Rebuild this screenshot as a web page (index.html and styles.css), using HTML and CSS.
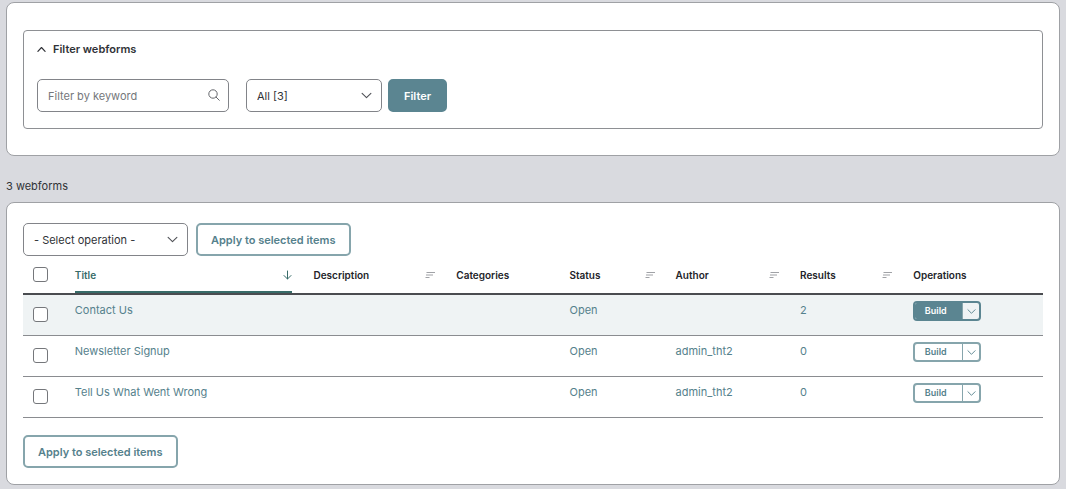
FILE: index.html
```
<!DOCTYPE html>
<html lang="en">
<head>
    <meta charset="UTF-8">
    <meta name="viewport" content="width=device-width, initial-scale=1.0">
    <title>Webforms</title>
    <link rel="stylesheet" href="styles.css">
</head>
<body>

    <!-- Shared icons -->
    <svg class="sprite" aria-hidden="true">
        <symbol id="chevron-down" viewBox="0 0 10 10">
            <path d="M1 3l4 4 4-4" fill="none" stroke="currentColor" stroke-linecap="round" stroke-linejoin="round"/>
        </symbol>
        <symbol id="sort" viewBox="0 0 10 8">
            <path d="M1.5 1.5H10M1 4h7M.5 6.5h4" fill="none" stroke="currentColor"/>
        </symbol>
    </svg>

    <main class="page">

        <!-- Filter -->
        <section class="card card-filter">
            <details class="filter" open>
                <summary class="filter-title">
                    <svg class="filter-arrow" viewBox="0 0 10 10" aria-hidden="true">
                        <path d="M1 7l4-4.200 4 4.200" fill="none" stroke="currentColor" stroke-width="1.300" stroke-linecap="round" stroke-linejoin="round"/>
                    </svg>
                    Filter webforms
                </summary>
                <form class="filter-form">
                    <div class="field field-search">
                        <input class="input" type="text" placeholder="Filter by keyword" aria-label="Filter by keyword">
                        <svg class="field-icon search-icon" viewBox="0 0 12 12" aria-hidden="true">
                            <circle cx="5" cy="5" r="4.200" fill="none" stroke="currentColor"/>
                            <path d="M8.100 8.100l3.200 3.200" stroke="currentColor" stroke-linecap="round"/>
                        </svg>
                    </div>
                    <div class="field field-state">
                        <select class="input" aria-label="State">
                            <option>All [3]</option>
                        </select>
                        <svg class="field-icon" aria-hidden="true"><use href="#chevron-down"/></svg>
                    </div>
                    <button class="button button-primary" type="button">Filter</button>
                </form>
            </details>
        </section>

        <p class="count">3 webforms</p>

        <!-- List -->
        <section class="card card-list">
            <div class="bulk">
                <div class="field field-operation">
                    <select class="input" aria-label="Operation">
                        <option>- Select operation -</option>
                    </select>
                    <svg class="field-icon" aria-hidden="true"><use href="#chevron-down"/></svg>
                </div>
                <button class="button" type="button">Apply to selected items</button>
            </div>

            <table class="table">
                <colgroup>
                    <col class="col-check">
                    <col class="col-title">
                    <col class="col-description">
                    <col class="col-categories">
                    <col class="col-status">
                    <col class="col-author">
                    <col class="col-results">
                    <col>
                </colgroup>
                <thead>
                    <tr>
                        <th class="cell-check"><input class="check" type="checkbox" aria-label="Select all webforms"></th>
                        <th>
                            <a class="sort sort-active" href="#">Title
                                <svg class="arrow-icon" viewBox="0 0 9 10" aria-hidden="true">
                                    <path d="M4.500 1v8M1 5.500L4.500 9 8 5.500" fill="none" stroke="currentColor" stroke-linecap="round" stroke-linejoin="round"/>
                                </svg>
                            </a>
                        </th>
                        <th><a class="sort" href="#">Description <svg class="sort-icon" aria-hidden="true"><use href="#sort"/></svg></a></th>
                        <th>Categories</th>
                        <th><a class="sort" href="#">Status <svg class="sort-icon" aria-hidden="true"><use href="#sort"/></svg></a></th>
                        <th><a class="sort" href="#">Author <svg class="sort-icon" aria-hidden="true"><use href="#sort"/></svg></a></th>
                        <th><a class="sort" href="#">Results <svg class="sort-icon" aria-hidden="true"><use href="#sort"/></svg></a></th>
                        <th>Operations</th>
                    </tr>
                </thead>
                <tbody>
                    <tr class="row-active">
                        <td class="cell-check"><input class="check" type="checkbox" aria-label="Select Contact Us"></td>
                        <td><a href="#">Contact Us</a></td>
                        <td></td>
                        <td></td>
                        <td><a href="#">Open</a></td>
                        <td></td>
                        <td><a href="#">2</a></td>
                        <td class="cell-ops">
                            <div class="dropbutton">
                                <button class="dropbutton-main" type="button">Build</button>
                                <button class="dropbutton-toggle" type="button" aria-label="More operations"><svg aria-hidden="true"><use href="#chevron-down"/></svg></button>
                            </div>
                        </td>
                    </tr>
                    <tr>
                        <td class="cell-check"><input class="check" type="checkbox" aria-label="Select Newsletter Signup"></td>
                        <td><a href="#">Newsletter Signup</a></td>
                        <td></td>
                        <td></td>
                        <td><a href="#">Open</a></td>
                        <td><a href="#">admin_tht2</a></td>
                        <td><a href="#">0</a></td>
                        <td class="cell-ops">
                            <div class="dropbutton">
                                <button class="dropbutton-main" type="button">Build</button>
                                <button class="dropbutton-toggle" type="button" aria-label="More operations"><svg aria-hidden="true"><use href="#chevron-down"/></svg></button>
                            </div>
                        </td>
                    </tr>
                    <tr>
                        <td class="cell-check"><input class="check" type="checkbox" aria-label="Select Tell Us What Went Wrong"></td>
                        <td><a href="#">Tell Us What Went Wrong</a></td>
                        <td></td>
                        <td></td>
                        <td><a href="#">Open</a></td>
                        <td><a href="#">admin_tht2</a></td>
                        <td><a href="#">0</a></td>
                        <td class="cell-ops">
                            <div class="dropbutton">
                                <button class="dropbutton-main" type="button">Build</button>
                                <button class="dropbutton-toggle" type="button" aria-label="More operations"><svg aria-hidden="true"><use href="#chevron-down"/></svg></button>
                            </div>
                        </td>
                    </tr>
                </tbody>
            </table>

            <button class="button" type="button">Apply to selected items</button>
        </section>

    </main>

</body>
</html>
```
FILE: styles.css
```
* {
    box-sizing: border-box;
}

body {
    margin: 0;
    background: #d9dadf;
    color: #303237;
    font-family: Inter, "Liberation Sans", sans-serif;
    font-size: 11px;
    line-height: 16px;
}

input, select, button {
    font: inherit;
    color: inherit;
}

a {
    color: #55818c;
    text-decoration: none;
}

.sprite {
    display: none;
}

.page {
    padding: 2px 6px 4px;
}

/* Cards */
.card {
    padding: 0 16px;
    background: #fff;
    border: 1px solid #9fa1a5;
    border-radius: 8px;
}

.card-filter {
    padding-top: 27px;
    padding-bottom: 26px;
}

.card-list {
    padding-top: 20px;
    padding-bottom: 16px;
}

.count {
    margin: 0;
    padding: 22px 0 8px;
}

/* Filter */
.filter {
    padding: 10px 13px 16px;
    border: 1px solid #8e9094;
    border-radius: 4px;
}

.filter-title {
    display: flex;
    align-items: center;
    gap: 7px;
    font-weight: 600;
    list-style: none;
}

.filter-arrow {
    width: 9px;
    height: 9px;
}

.filter-form {
    display: flex;
    align-items: center;
    padding-top: 22px;
}

/* Form controls */
.field {
    position: relative;
}

.field-search {
    width: 192px;
    margin-right: 17px;
}

.field-state {
    width: 136px;
    margin-right: 6px;
}

.field-operation {
    width: 165px;
}

.input {
    display: block;
    width: 100%;
    height: 33px;
    padding: 0 10px;
    appearance: none;
    background: #fff;
    border: 1px solid #828489;
    border-radius: 5px;
}

.input::placeholder {
    color: #75777b;
    opacity: 1;
}

.field-icon {
    position: absolute;
    top: 11px;
    right: 10px;
    width: 11px;
    height: 11px;
    color: #505257;
    pointer-events: none;
}

.search-icon {
    top: 10px;
    right: 9px;
    width: 12px;
    height: 12px;
    color: #65676c;
}

.button {
    height: 33px;
    padding: 0 13px;
    background: #fff;
    border: 2px solid #86a5ac;
    border-radius: 5px;
    color: #55818c;
    font-weight: 600;
}

.button-primary {
    padding: 0 14px;
    background: #5b8591;
    border-color: #5b8591;
    color: #fff;
}

.bulk {
    display: flex;
    gap: 8px;
}

/* Table */
.table {
    width: 100%;
    margin-bottom: 17px;
    border-collapse: separate;
    border-spacing: 0;
    table-layout: fixed;
}

.col-check { width: 4%; }
.col-title { width: 23.4%; }
.col-description { width: 14%; }
.col-categories { width: 11.1%; }
.col-status { width: 10.4%; }
.col-author { width: 12.2%; }
.col-results { width: 11.1%; }

.table th {
    height: 39px;
    padding: 0 10px 0 11px;
    border-bottom: 2px solid #4a4c50;
    color: #232429;
    font-size: 10px;
    font-weight: 600;
    text-align: left;
}

.table td {
    height: 41px;
    padding: 7px 10px 0 11px;
    border-bottom: 1px solid #8a8c90;
    vertical-align: top;
}

.table .cell-check {
    padding-left: 10px;
}

.table td.cell-check {
    padding-top: 12px;
}

.table .cell-ops {
    padding-top: 6px;
}

.row-active {
    background: #eff3f4;
}

.check {
    display: block;
    width: 15px;
    height: 15px;
    margin: 0;
    appearance: none;
    background: #fff;
    border: 1px solid #75777b;
    border-radius: 3px;
}

.sort {
    display: flex;
    align-items: center;
    justify-content: space-between;
    height: 37px;
    color: inherit;
}

.sort-active {
    border-top: 2px solid transparent;
    border-bottom: 2px solid #376b68;
    color: #376b68;
}

.sort-icon {
    width: 10px;
    height: 8px;
    color: #a0a2a6;
}

.arrow-icon {
    width: 9px;
    height: 10px;
}

/* Split button in the operations column */
.dropbutton {
    display: flex;
    width: 68px;
    height: 20px;
    overflow: hidden;
    border: 2px solid #86a5ac;
    border-radius: 4px;
    color: #55818c;
}

.dropbutton button {
    padding: 0;
    background: none;
    border: 0;
}

.dropbutton .dropbutton-main {
    flex: 1;
    padding-right: 6px;
    font-size: 9px;
    font-weight: 600;
    line-height: 16px;
}

.dropbutton .dropbutton-toggle {
    display: flex;
    align-items: center;
    justify-content: center;
    width: 17px;
    border-left: 1px solid #86a5ac;
    color: #55818c;
}

.dropbutton-toggle svg {
    width: 9px;
    height: 9px;
}

.row-active .dropbutton {
    border-color: #5b8591;
}

.row-active .dropbutton .dropbutton-main {
    background: #5b8591;
    color: #fff;
}
```
